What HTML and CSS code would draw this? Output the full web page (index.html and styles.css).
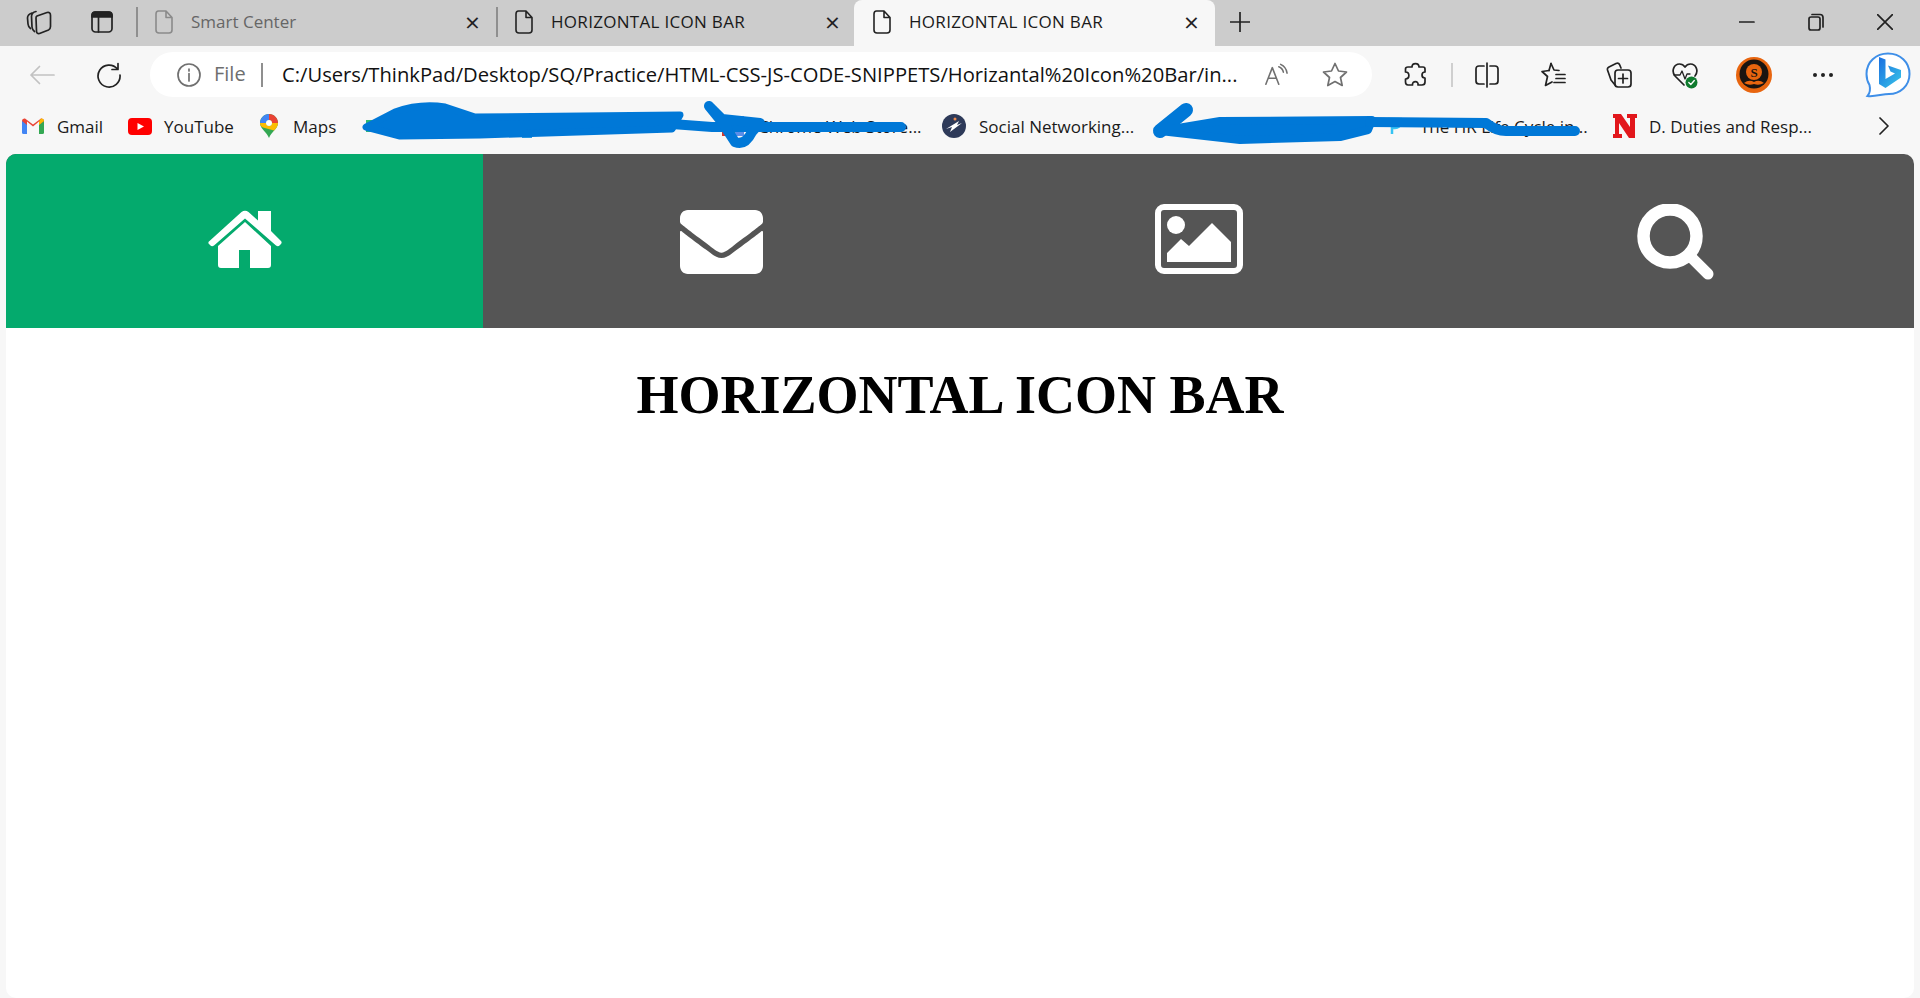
FILE: index.html
```html
<!DOCTYPE html>
<html lang="en">
<head>
    <meta charset="UTF-8">
    <meta name="viewport" content="width=device-width, initial-scale=1.0">
    <title>HORIZONTAL ICON BAR</title>
    <link rel="stylesheet" href="styles.css">
</head>
<body>
    <!-- tab strip -->
    <div class="tabstrip">
        <div class="strip-btn">
            <svg width="28" height="26" viewBox="0 0 28 26" class="line-icon">
                <path d="M7 4 Q2.500 5.500 2.500 9 L3 15 Q3.300 18 5.500 19.500"/>
                <path d="M11 2.500 Q6.500 3.500 6.500 7.500 L7 18 Q7.300 21 9.500 22.500"/>
                <path d="M12 7 L22 3.500 Q25.500 2.800 25.500 6.500 V17.500 Q25.500 20 23.500 21 L14.500 24.500 Q11.500 25 11.500 22 L11 9 Q11 7.500 12 7 Z"/>
            </svg>
        </div>
        <div class="strip-btn">
            <svg width="22" height="22" viewBox="0 0 22 22" class="line-icon">
                <rect x="1" y="1" width="20" height="20" rx="3.500"/>
                <path d="M1 6 V4 Q1 1 4 1 H18 Q21 1 21 4 V6 Z" fill="#222"/>
                <path d="M7.500 6 V21"/>
            </svg>
        </div>
        <div class="tab-sep first"></div>
        <div class="tab tab-muted">
            <svg width="18" height="24" viewBox="0 0 18 24" class="doc-icon"><path d="M3.500 1 H11 L17 7.500 V20 Q17 23 14 23 H4 Q1 23 1 20 V4 Q1 1 3.500 1 Z M11 1 V7.500 H17"/></svg>
            <span class="tab-title">Smart Center</span>
            <span class="tab-close">&times;</span>
        </div>
        <div class="tab-sep"></div>
        <div class="tab tab-second">
            <svg width="18" height="24" viewBox="0 0 18 24" class="doc-icon"><path d="M3.500 1 H11 L17 7.500 V20 Q17 23 14 23 H4 Q1 23 1 20 V4 Q1 1 3.500 1 Z M11 1 V7.500 H17"/></svg>
            <span class="tab-title">HORIZONTAL ICON BAR</span>
            <span class="tab-close">&times;</span>
        </div>
        <div class="tab tab-active">
            <svg width="18" height="24" viewBox="0 0 18 24" class="doc-icon"><path d="M3.500 1 H11 L17 7.500 V20 Q17 23 14 23 H4 Q1 23 1 20 V4 Q1 1 3.500 1 Z M11 1 V7.500 H17"/></svg>
            <span class="tab-title">HORIZONTAL ICON BAR</span>
            <span class="tab-close">&times;</span>
        </div>
        <div class="new-tab">
            <svg width="20" height="20" viewBox="0 0 20 20" class="line-icon"><path d="M10 0 V20 M0 10 H20"/></svg>
        </div>
        <div class="window-controls">
            <svg width="16" height="16" viewBox="0 0 16 16" class="line-icon"><path d="M0 8 H15"/></svg>
            <svg width="16" height="18" viewBox="0 0 16 18" class="line-icon">
                <rect x="1" y="4" width="11" height="13" rx="2"/>
                <path d="M4 1.500 H12 Q15 1.500 15 4.500 V14"/>
            </svg>
            <svg width="16" height="16" viewBox="0 0 16 16" class="line-icon"><path d="M0.500 0.500 L15.500 15.500 M15.500 0.500 L0.500 15.500"/></svg>
        </div>
    </div>

    <!-- address bar -->
    <div class="toolbar">
        <div class="nav-btn">
            <svg width="26" height="20" viewBox="0 0 26 20" class="line-icon faint"><path d="M25 10 H2 M10.500 1.500 L2 10 L10.500 18.500"/></svg>
        </div>
        <div class="nav-btn">
            <svg width="26" height="26" viewBox="0 0 26 26" class="line-icon"><path d="M21.500 7 A11 11 0 1 0 24 13 M22 1.500 V7.500 H16"/></svg>
        </div>
        <div class="address">
            <svg width="24" height="24" viewBox="0 0 24 24" class="line-icon grey">
                <circle cx="12" cy="12" r="11"/>
                <path d="M12 10.500 V18 M12 6 V8"/>
            </svg>
            <span class="addr-file">File</span>
            <span class="addr-sep"></span>
            <span class="addr-url">C:/Users/ThinkPad/Desktop/SQ/Practice/HTML-CSS-JS-CODE-SNIPPETS/Horizantal%20Icon%20Bar/in...</span>
            <svg width="24" height="24" viewBox="0 0 26 24" class="line-icon grey read-icon">
                <path d="M2 22 L9 4 L16 22 M4.500 15.500 H13.500"/>
                <path d="M16 3 A8 8 0 0 1 21 9 M18 0.500 A12 12 0 0 1 25 10"/>
            </svg>
            <svg width="26" height="25" viewBox="0 0 26 25" class="line-icon grey star-icon">
                <path d="M13 1.500 L16.500 9 L24.500 10 L18.500 15.500 L20.200 23.500 L13 19.500 L5.800 23.500 L7.500 15.500 L1.500 10 L9.500 9 Z"/>
            </svg>
        </div>
        <div class="tool-btn first">
            <svg width="24" height="25" viewBox="0 0 24 25" class="line-icon">
                <path d="M9 5 C9 0.500 16 0.500 16 5 H20 Q22 5 22 7 V10 C18 10 18 16 22 16 V20 Q22 23 19 23 H15 C16 18.500 9 18.500 9.500 23 H5 Q2.500 23 2.500 20 V17 C7 17 7 10 2.500 10 V7 Q2.500 5 5 5 Z"/>
            </svg>
        </div>
        <div class="tool-sep"></div>
        <div class="tool-btn">
            <svg width="24" height="26" viewBox="0 0 24 26" class="line-icon">
                <path d="M9 4 H4 Q1 4 1 7 V19 Q1 22 4 22 H9 M15 4 H20 Q23 4 23 7 V19 Q23 22 20 22 H15 M12 1 V25"/>
            </svg>
        </div>
        <div class="tool-btn">
            <svg width="26" height="26" viewBox="0 0 26 26" class="line-icon">
                <path d="M11 1.500 L14 8 L19 8.500 M9 8.500 L2 9.500 L7.500 14.500 L5.500 23.500 L12 20"/>
                <path d="M9 8.500 L11 1.500 M16 12.500 H25 M16 16.500 H25 M14 20.500 H25"/>
            </svg>
        </div>
        <div class="tool-btn">
            <svg width="26" height="28" viewBox="0 0 26 28" class="line-icon">
                <path d="M9 24 L5 19 L1.500 9 Q1 7 3 6 L10 2.500 Q12.500 1.500 13.500 3.500 L15 7"/>
                <rect x="9" y="9" width="16" height="17" rx="3"/>
                <path d="M17 13 V22 M12.500 17.500 H21.500"/>
            </svg>
        </div>
        <div class="tool-btn heart-btn">
            <svg width="26" height="28" viewBox="0 0 26 28" class="line-icon">
                <path d="M12 24 L3 15 C-1 10 2 3 7.500 3 C10 3 12 4.500 13 6 C14 4.500 16 3 18.500 3 C24 3 27 10 23 15"/>
                <path d="M2 14 H8 L10 10 L13 18 L15 13 H18" class="thin"/>
                <circle cx="19.500" cy="21.500" r="6" fill="#0f7b2e" stroke="none"/>
                <path d="M16.800 21.500 L18.800 23.500 L22.300 19.500" stroke="#fff" class="thin"/>
            </svg>
        </div>
        <div class="tool-btn avatar-btn">
            <svg width="36" height="36" viewBox="0 0 36 36" class="avatar">
                <circle cx="18" cy="18" r="18" fill="#e8650f"/>
                <circle cx="18" cy="17" r="14.500" fill="#1a1410"/>
                <circle cx="18" cy="15" r="8" fill="#e8650f"/>
                <text x="18" y="19.500" text-anchor="middle" class="avatar-letter">S</text>
                <path d="M8 26 Q13 22 18 25 Q23 22 28 26 Q23 29 18 27 Q13 29 8 26 Z" fill="#e8650f"/>
            </svg>
        </div>
        <div class="tool-btn dots-btn">
            <div class="dots"><i></i><i></i><i></i></div>
        </div>
        <div class="tool-btn bing-btn">
            <svg width="46" height="46" viewBox="0 0 46 46">
                <defs>
                    <linearGradient id="bingGrad" x1="0" y1="0" x2="1" y2="1">
                        <stop offset="0" stop-color="#1b6fe0"/>
                        <stop offset="1" stop-color="#38c6e8"/>
                    </linearGradient>
                </defs>
                <path d="M23 1.500 C35 1.500 44.500 10 44.500 22 C44.500 34 35 42 24 42 C17 42 10 45 2.500 44 C5 41 5.500 37 4.500 33 C2 29 1.500 25 1.500 22 C1.500 10 11 1.500 23 1.500 Z" fill="#fff" stroke="#3f8fe8" stroke-width="2"/>
                <path d="M14 5 L20.500 7.500 V27 L30 21.500 L25.500 19.500 L23 13.500 L36 18 V25.500 L20.500 36 L14 32 Z" fill="url(#bingGrad)"/>
            </svg>
        </div>
    </div>

    <!-- favourites -->
    <div class="bookmarks">
        <div class="bookmark gap-gmail">
            <svg width="22" height="16" viewBox="0 0 22 16">
                <path d="M0 3 L3 1 L5 3.500 V16 H1.500 Q0 16 0 14.500 Z" fill="#4285f4"/>
                <path d="M22 3 L19 1 L17 3.500 V16 H20.500 Q22 16 22 14.500 Z" fill="#34a853"/>
                <path d="M0 3 Q0 0 3 0.500 L11 6.500 L19 0.500 Q22 0 22 3 L17 7 V3.500 L11 8.500 L5 3.500 V7 Z" fill="#ea4335"/>
                <path d="M17 3.500 L19 0.500 Q22 0 22 3 L17 7 Z" fill="#fbbc04"/>
            </svg>
            <span>Gmail</span>
        </div>
        <div class="bookmark gap-yt">
            <svg width="24" height="17" viewBox="0 0 24 17">
                <rect width="24" height="17" rx="4" fill="#f00"/>
                <path d="M9.500 5 L16 8.500 L9.500 12 Z" fill="#fff"/>
            </svg>
            <span>YouTube</span>
        </div>
        <div class="bookmark gap-maps">
            <svg width="18" height="24" viewBox="0 0 18 24">
                <path d="M9 0 C14 0 18 4 18 9 C18 15 11 18 9 24 C7 18 0 15 0 9 C0 4 4 0 9 0 Z" fill="#34a853"/>
                <path d="M2.500 3 C4 1 6.500 0 9 0 L9 6 C7.500 6 6 7.500 6 9 L0 9 C0 7 1 4.500 2.500 3 Z" fill="#4285f4"/>
                <path d="M9 0 C14 0 18 4 18 9 L12 9 C12 7.500 10.500 6 9 6 Z" fill="#ea4335"/>
                <path d="M0 9 L6 9 C6 10.500 7.500 12 9 12 C11 12 12 10.500 12 9 L18 9 C18 12 16 14.500 14 16.500 L3 13.500 C1 12.500 0 11 0 9 Z" fill="#fbbc04"/>
                <circle cx="9" cy="9" r="3" fill="#fff"/>
            </svg>
            <span>Maps</span>
        </div>
        <div class="bookmark">
            <span class="fav-green"></span>
        </div>
        <div class="bookmark">
            <span class="fav-blue"></span>
        </div>
        <div class="bookmark gap-store">
            <span class="fav-store"></span>
            <span>Chrome Web Store...</span>
        </div>
        <div class="bookmark gap-social">
            <svg width="24" height="24" viewBox="0 0 24 24">
                <circle cx="12" cy="12" r="12" fill="#2e3a59"/>
                <path d="M4 15 L17 7 L15 11 L20 9 L8 18 L10 13 Z" fill="#fff"/>
                <circle cx="13" cy="5" r="1.500" fill="#f08a4b"/>
            </svg>
            <span>Social Networking...</span>
        </div>
        <div class="bookmark gap-hidden">
            <span class="fav-blank"></span>
            <span>The ...</span>
        </div>
        <div class="bookmark gap-hr">
            <svg width="16" height="24" viewBox="0 0 16 24" fill="none" stroke="#35c3f3" stroke-width="2.500">
                <path d="M1 5 H15 M4 14 H8 C15 14 15 5 8 5 M5 5 V20"/>
            </svg>
            <span>The HR Life Cycle in...</span>
        </div>
        <div class="bookmark gap-n">
            <svg width="24" height="24" viewBox="0 0 24 24">
                <path d="M0 0 H8 L17 13 V4 H14 V0 H24 V4 H22 V24 H16 L6 9 V20 H9 V24 H0 V20 H2 V4 H0 Z" fill="#e2171c"/>
            </svg>
            <span>D. Duties and Resp...</span>
        </div>
        <div class="more">
            <svg width="10" height="18" viewBox="0 0 10 18" class="line-icon"><path d="M1 1 L9 9 L1 17"/></svg>
        </div>
    </div>

    <!-- the page itself -->
    <div class="page">
        <div class="icon-bar">
            <a href="#" class="bar-item active">
                <svg width="74" height="58" viewBox="0 0 74 58" fill="#fff">
                    <path d="M50 1 H63 V21 L73 31 Q74.500 33 72.500 34.500 L71.500 35.500 Q70 37 68 35.500 L37 8.500 L6 35.500 Q4 37 2.500 35.500 L1 34 Q-0.500 32.500 1.500 31 L33.500 2 Q37 -0.500 40.500 2 L50 10.500 Z"/>
                    <path d="M37 12 L63 36 V55 Q63 58 60 58 H42 V40 H31 V58 H13 Q10 58 10 55 V36 Z"/>
                </svg>
            </a>
            <a href="#" class="bar-item">
                <svg width="83" height="64" viewBox="0 64 512 384" preserveAspectRatio="none" fill="#fff">
                    <path d="M502.300 190.800c3.900-3.100 9.700-.2 9.700 4.700V400c0 26.500-21.500 48-48 48H48c-26.500 0-48-21.500-48-48V195.600c0-5 5.700-7.800 9.700-4.700 22.400 17.400 52.100 39.500 154.100 113.600 21.100 15.400 56.700 47.800 92.200 47.600 35.700.3 72-32.800 92.300-47.600 102-74.100 131.600-96.300 154-113.700zM256 320c23.200.4 56.600-29.200 73.400-41.400 132.700-96.300 142.800-104.700 173.400-128.700 5.800-4.500 9.200-11.500 9.200-18.900v-19c0-26.500-21.500-48-48-48H48C21.500 64 0 85.500 0 112v19c0 7.400 3.400 14.300 9.200 18.900 30.600 23.900 40.700 32.400 173.400 128.700 16.800 12.200 50.200 41.800 73.400 41.400z"/>
                </svg>
            </a>
            <a href="#" class="bar-item tall">
                <svg width="88" height="70" viewBox="0 0 88 70" fill="#fff">
                    <rect x="3" y="3" width="82" height="64" rx="6" fill="none" stroke="#fff" stroke-width="6"/>
                    <circle cx="21" cy="21" r="9"/>
                    <path d="M12 58 V49 L26 35 L34 42 L57 19 L76 38 V58 Z"/>
                </svg>
            </a>
            <a href="#" class="bar-item tall">
                <svg width="78" height="76" viewBox="0 0 78 76" fill="none" stroke="#fff">
                    <circle cx="33" cy="32" r="26.500" stroke-width="12.500"/>
                    <path d="M54 53 L71 70" stroke-width="11" stroke-linecap="round"/>
                </svg>
            </a>
        </div>
        <h1 class="page-title">HORIZONTAL ICON BAR</h1>
    </div>

    <!-- marker scribbles over the favourites bar -->
    <svg class="scribble" width="1920" height="160" viewBox="0 0 1920 160" fill="none" stroke="#0078d7" stroke-linecap="round" stroke-linejoin="round">
        <path d="M366 127 L395 112 Q420 103 445 107 L475 117 L680 115 L672 129 L480 135 L400 136 Z" fill="#0078d7" stroke-width="7"/>
        <path d="M672 124 L712 127 L901 127" stroke-width="10"/>
        <path d="M709 106 L722 122 L735 142 Q745 146 752 132 L760 123 L722 119 L709 106" stroke-width="10"/>
        <path d="M1186 110 L1160 131" stroke-width="14"/>
        <path d="M1160 131 L1240 140 L1340 137 L1368 130 L1372 120 L1220 121 Z" fill="#0078d7" stroke-width="8"/>
        <path d="M1370 122 L1486 123 Q1496 131 1506 131 L1575 131" stroke-width="10"/>
    </svg>
</body>
</html>
```

FILE: styles.css
```css
* {
    box-sizing: border-box;
}
body {
    margin: 0;
    height: 998px;
    overflow: hidden;
    position: relative;
    display: flex;
    flex-direction: column;
    background-color: #f7f7f7;
    font-family: "Open Sans", "Noto Sans", sans-serif;
    color: #1a1a1a;
}
.line-icon {
    fill: none;
    stroke: #222;
    stroke-width: 1.7;
    stroke-linecap: round;
    stroke-linejoin: round;
}
.line-icon.faint {
    stroke: #c2c2c2;
}
.line-icon.grey {
    stroke: #707070;
}
.line-icon .thin {
    stroke-width: 1.300;
}

/* tab strip */
.tabstrip {
    height: 46px;
    flex: none;
    display: flex;
    align-items: center;
    padding-bottom: 3px;
    background-color: #cccccc;
}
.strip-btn {
    width: 63px;
    display: flex;
    justify-content: center;
    margin-left: 7px;
}
.strip-btn + .strip-btn {
    margin-left: 0;
}
.tab-sep {
    width: 2px;
    height: 30px;
    background-color: #8f8f8f;
}
.tab-sep.first {
    margin-left: 3px;
}
.tab {
    align-self: flex-start;
    height: 46px;
    width: 358px;
    display: flex;
    align-items: center;
    padding: 0 16px 3px 17px;
    font-size: 17px;
}
.tab-second {
    padding-right: 14px;
    width: 356px;
}
.tab-active {
    width: 361px;
    padding-left: 19px;
    background-color: #f7f7f7;
    border-radius: 8px 8px 0 0;
}
.tab-title {
    flex: 1;
    margin-left: 18px;
    white-space: nowrap;
}
.tab-second .tab-title,
.tab-active .tab-title {
    letter-spacing: 0.3px;
}
.tab-close {
    font-size: 26px;
    line-height: 1;
    width: 15px;
    text-align: center;
    color: #222;
}
.tab-muted .tab-title {
    color: #666;
}
.doc-icon {
    fill: none;
    stroke: #222;
    stroke-width: 1.600;
    stroke-linejoin: round;
}
.tab-muted .doc-icon {
    stroke: #8a8a8a;
}
.new-tab {
    margin-left: 15px;
    display: flex;
}
.window-controls {
    margin-left: auto;
    width: 181px;
    padding-right: 27px;
    display: flex;
    justify-content: space-between;
    align-items: center;
}

/* address bar */
.toolbar {
    height: 58px;
    flex: none;
    display: flex;
    align-items: center;
    padding-bottom: 1px;
}
.nav-btn {
    width: 67px;
    display: flex;
    justify-content: center;
    margin-left: 8px;
}
.nav-btn + .nav-btn {
    margin-left: 0;
}
.address {
    width: 1222px;
    height: 45px;
    margin-left: 8px;
    padding-left: 27px;
    display: flex;
    align-items: center;
    background-color: #fff;
    border-radius: 23px;
}
.addr-file {
    width: 34px;
    margin-left: 13px;
    margin-bottom: 2px;
    font-size: 20px;
    color: #6e6e6e;
}
.addr-sep {
    width: 2px;
    height: 24px;
    margin: 0 19px 0 13px;
    background-color: #8f8f8f;
}
.addr-url {
    width: 982px;
    margin-bottom: 2px;
    font-size: 20.200px;
    color: #111;
    white-space: nowrap;
}
.read-icon {
    flex: none;
}
.star-icon {
    flex: none;
    margin-left: 34px;
}
.tool-btn {
    width: 66px;
    flex: none;
    display: flex;
    justify-content: center;
    align-items: center;
}
.tool-btn.first {
    margin-left: 10px;
}
.tool-sep {
    width: 2px;
    height: 24px;
    margin: 0 1px 0 3px;
    background-color: #cfcfcf;
}
.avatar-btn {
    margin-left: 3px;
}
.dots-btn {
    margin-left: 3px;
}
.avatar-letter {
    font-family: "Liberation Serif", serif;
    font-weight: bold;
    font-size: 13px;
    fill: #1a1410;
}
.dots {
    display: flex;
    gap: 4px;
}
.dots i {
    width: 4px;
    height: 4px;
    border-radius: 50%;
    background-color: #222;
}
.bing-btn {
    width: 60px;
    margin-left: 2px;
}

/* favourites */
.bookmarks {
    height: 50px;
    flex: none;
    display: grid;
    grid-template-columns: 106px 132px 102px 160px 200px 220px 223px 222px 226px 244px 50px;
    align-items: center;
    padding: 0 0 6px 22px;
    font-size: 17px;
}
.bookmark {
    display: flex;
    align-items: center;
    white-space: nowrap;
}
.gap-gmail { gap: 13px; }
.gap-yt { gap: 12px; }
.gap-maps { gap: 15px; }
.gap-store { gap: 14px; }
.gap-social { gap: 13px; }
.gap-hidden { gap: 10px; }
.gap-hr { gap: 17px; }
.gap-n { gap: 12px; }
.fav-green {
    width: 16px;
    height: 12px;
    margin-left: 4px;
    background-color: #2eb872;
}
.fav-blue {
    width: 10px;
    height: 24px;
    background-color: #2c9ae0;
}
.fav-store {
    width: 22px;
    height: 20px;
    background: linear-gradient(90deg, #d43a2f 0 40%, #3fa557 40% 60%, #5b8ee8 60%);
}
.fav-blank {
    width: 22px;
    height: 20px;
}
.more {
    display: flex;
    justify-content: center;
    padding-left: 4px;
}

/* the page itself */
.page {
    flex: 1;
    margin: 0 6px;
    background-color: #fff;
    border-radius: 10px;
    overflow: hidden;
}
.icon-bar {
    display: flex;
    height: 174px;
    background-color: #555;
}
.bar-item {
    flex: 1;
    display: flex;
    justify-content: center;
    align-items: flex-start;
    padding-top: 56px;
}
.bar-item.tall {
    padding-top: 50px;
}
.bar-item.active {
    background-color: #04aa6d;
}
.page-title {
    margin: 36px 0 0;
    text-align: center;
    font-family: "Liberation Serif", "Times New Roman", serif;
    font-weight: bold;
    font-size: 54px;
    color: #000;
}

/* marker scribbles */
.scribble {
    position: absolute;
    left: 0;
    top: 0;
}
```
